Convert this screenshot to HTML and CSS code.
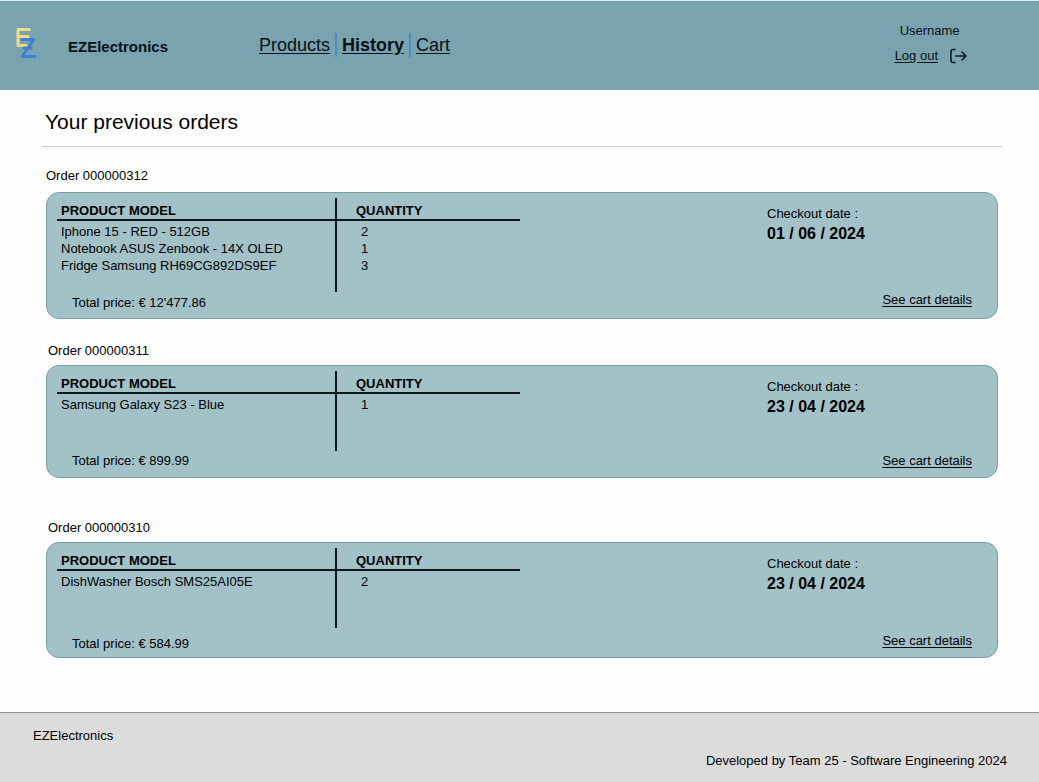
FILE: index.html
```html
<!DOCTYPE html>
<html lang="en">
<head>
<meta charset="utf-8">
<meta name="viewport" content="width=device-width, initial-scale=1">
<title>EZElectronics - Order history</title>
<link rel="stylesheet" href="styles.css">
</head>
<body>
<header class="topbar">
  <svg class="logo" viewBox="0 0 24 34" width="24" height="34" fill="none" stroke-width="3" stroke-linecap="round" stroke-linejoin="round" role="img" aria-label="EZ logo">
    <path d="M15.500 3.500H4v16h8M4 10.500h10" stroke="#f0dc88"/>
    <path d="M8 13.500h12L8 30.500h13M10 22h7" stroke="#3f7fd6"/>
  </svg>
  <span class="brand">EZElectronics</span>
  <nav class="nav">
    <a href="#">Products</a>
    <a href="#" class="current" aria-current="page">History</a>
    <a href="#">Cart</a>
  </nav>
  <div class="user">
    <span class="username">Username</span>
    <a class="logout" href="#"><span class="logout-text">Log out</span>
      <svg viewBox="0 0 18 16" width="18" height="16" fill="none" stroke="#0b1a22" stroke-width="1.500" stroke-linecap="round" stroke-linejoin="round" aria-hidden="true">
        <path d="M6 1.500H4Q2 1.500 2 3.500v9Q2 14.500 4 14.500h2M7 8H17M13 4l4 4-4 4"/>
      </svg>
    </a>
  </div>
</header>

<main class="content">
  <h1 class="title">Your previous orders</h1>

  <section class="order order-first">
    <h2 class="order-name">Order 000000312</h2>
    <div class="card card-tall">
      <div class="items">
        <table class="products">
          <thead><tr><th>PRODUCT MODEL</th><th>QUANTITY</th></tr></thead>
          <tbody>
            <tr><td>Iphone 15 - RED - 512GB</td><td>2</td></tr>
            <tr><td>Notebook ASUS Zenbook - 14X OLED</td><td>1</td></tr>
            <tr><td>Fridge Samsung RH69CG892DS9EF</td><td>3</td></tr>
          </tbody>
        </table>
        <p class="total">Total price: € 12'477.86</p>
      </div>
      <div class="checkout">
        <span>Checkout date :</span>
        <strong class="date">01 / 06 / 2024</strong>
        <a class="details" href="#">See cart details</a>
      </div>
    </div>
  </section>

  <section class="order">
    <h2 class="order-name">Order 000000311</h2>
    <div class="card">
      <div class="items">
        <table class="products">
          <thead><tr><th>PRODUCT MODEL</th><th>QUANTITY</th></tr></thead>
          <tbody>
            <tr><td>Samsung Galaxy S23 - Blue</td><td>1</td></tr>
          </tbody>
        </table>
        <p class="total">Total price: € 899.99</p>
      </div>
      <div class="checkout">
        <span>Checkout date :</span>
        <strong class="date">23 / 04 / 2024</strong>
        <a class="details" href="#">See cart details</a>
      </div>
    </div>
  </section>

  <section class="order order-last">
    <h2 class="order-name">Order 000000310</h2>
    <div class="card card-mid">
      <div class="items">
        <table class="products">
          <thead><tr><th>PRODUCT MODEL</th><th>QUANTITY</th></tr></thead>
          <tbody>
            <tr><td>DishWasher Bosch SMS25AI05E</td><td>2</td></tr>
          </tbody>
        </table>
        <p class="total">Total price: € 584.99</p>
      </div>
      <div class="checkout">
        <span>Checkout date :</span>
        <strong class="date">23 / 04 / 2024</strong>
        <a class="details" href="#">See cart details</a>
      </div>
    </div>
  </section>
</main>

<footer class="footer">
  <span>EZElectronics</span>
  <span class="credits">Developed by Team 25 - Software Engineering 2024</span>
</footer>
</body>
</html>
```
FILE: styles.css
```css
* {
  box-sizing: border-box;
}

body {
  margin: 0;
  min-height: 100vh;
  display: flex;
  flex-direction: column;
  background: #fefefe;
  color: #000;
  font-family: "Liberation Sans", Arial, sans-serif;
  font-size: 13px;
  line-height: 17px;
}

a {
  color: inherit;
  text-underline-offset: 2px;
}

.topbar {
  display: flex;
  align-items: flex-start;
  min-height: 90px;
  padding: 0 72px 0 14px;
  border-top: 1px solid #d5eef5;
  background: #78a3af;
  color: #04121a;
}

.logo {
  margin-top: 25px;
}

.brand {
  margin: 37px 0 0 30px;
  width: 186px;
  font-size: 15px;
  font-weight: 700;
}

.nav {
  display: flex;
  margin-top: 32px;
  font-size: 18px;
  line-height: 24px;
}

.nav a {
  padding: 0 5px;
}

.nav a + a {
  border-left: 2px solid #4a8bc8;
}

.nav .current {
  font-weight: 700;
}

.user {
  display: flex;
  flex-direction: column;
  gap: 8px;
  margin: 21px 0 0 auto;
}

.username {
  padding-left: 5px;
}

.logout {
  display: flex;
  align-items: center;
  gap: 11px;
  text-decoration: none;
}

.logout-text {
  text-decoration: underline;
}

.content {
  flex: 1;
  padding: 16px 37px 0 42px;
}

.title {
  margin: 0 0 20px;
  padding: 0 3px 8px;
  border-bottom: 1px solid #ccd0d1;
  font-size: 21px;
  font-weight: 400;
  line-height: 32px;
}

.order {
  margin: 0 4px 23px;
}

.order-last {
  margin-top: 41px;
}

.order-name {
  margin: 0 0 6px;
  padding-left: 2px;
  font-size: 13px;
  font-weight: 400;
}

.order-first .order-name {
  margin-bottom: 8px;
  padding-left: 0;
}

.card {
  display: flex;
  justify-content: space-between;
  min-height: 113px;
  padding: 5px 25px 8px 10px;
  border: 1px solid #779ea6;
  border-radius: 13px;
  background: #a2c2c8;
}

.card-tall {
  min-height: 127px;
  padding-bottom: 7px;
}

.card-mid {
  min-height: 116px;
  padding-bottom: 5px;
}

.items {
  display: flex;
  flex-direction: column;
  width: 463px;
}

.products {
  width: 100%;
  border-collapse: separate;
  border-spacing: 0;
}

.products th {
  height: 23px;
  padding: 5px 0 0 4px;
  border-bottom: 2px solid #10171a;
  font-weight: 700;
  line-height: 16px;
  text-align: left;
}

.products td {
  height: 17px;
  padding: 0 0 0 4px;
  vertical-align: top;
}

.products th:first-child,
.products td:first-child {
  width: 280px;
  border-right: 2px solid #10171a;
}

.products th:last-child {
  padding-left: 19px;
}

.products td:last-child {
  padding-left: 24px;
}

.products tbody tr:first-child td {
  height: 19px;
  padding-top: 2px;
}

.products tbody tr:last-child td {
  height: 35px;
}

.products tbody tr:only-child td {
  height: 57px;
}

.total {
  margin: auto 0 0;
  padding-left: 15px;
}

.checkout {
  display: flex;
  flex-direction: column;
  width: 205px;
  padding-top: 7px;
}

.date {
  margin-top: 2px;
  font-size: 16px;
  font-weight: 700;
  line-height: 20px;
}

.details {
  align-self: flex-end;
  margin-top: auto;
}

.card-tall .details,
.card-mid .details {
  margin-bottom: 3px;
}

.footer {
  display: flex;
  flex-direction: column;
  gap: 8px;
  min-height: 70px;
  padding: 14px 32px 0 33px;
  border-top: 1px solid #929595;
  background: #dcdcdc;
}

.credits {
  align-self: flex-end;
}
```
